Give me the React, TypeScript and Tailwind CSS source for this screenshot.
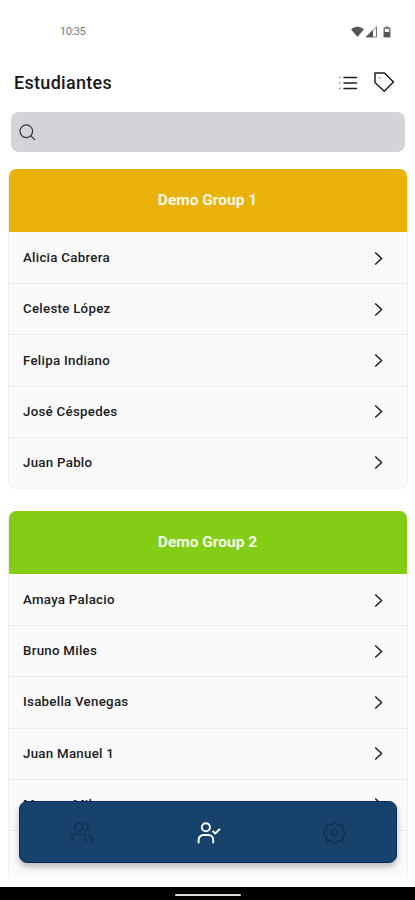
import type { ReactNode } from 'react'

type Group = {
  name: string
  color: string
  students: string[]
}

const groups: Group[] = [
  {
    name: 'Demo Group 1',
    color: 'bg-[#e8b208]',
    students: ['Alicia Cabrera', 'Celeste López', 'Felipa Indiano', 'José Céspedes', 'Juan Pablo'],
  },
  {
    name: 'Demo Group 2',
    color: 'bg-[#83ce14]',
    students: ['Amaya Palacio', 'Bruno Miles', 'Isabella Venegas', 'Juan Manuel 1', 'Marcos Milan', 'Marta Ruiz'],
  },
]

function Icon({ className, width = 1.5, children }: { className: string; width?: number; children: ReactNode }) {
  return (
    <svg
      viewBox="0 0 24 24"
      fill="none"
      stroke="currentColor"
      strokeWidth={width}
      strokeLinecap="round"
      strokeLinejoin="round"
      className={`shrink-0 ${className}`}
    >
      {children}
    </svg>
  )
}

function StatusBar() {
  return (
    <div className="flex h-[63px] items-center justify-between pl-[60px] pr-[24px]">
      <span className="mt-[2px] text-[11px] tracking-[-0.4px] text-[#777]">10:35</span>
      <svg viewBox="0 0 40 12" className="h-3 w-10 text-[#555]" fill="currentColor">
        <path d="M0 3.2C3.8-.2 9.2-.2 13 3.2L6.5 11Z" />
        <path d="M15 11 25.5.8V11Z" fill="none" stroke="currentColor" strokeWidth="0.8" />
        <path d="M15 11 22 4V11Z" />
        <path d="M34.5.5h3v1h2V11.5h-7V1.5h2Z" fill="#777" />
        <path d="M34 3h4v3h-4Z" fill="#fff" />
        <path d="M33 6h6v5h-6Z" />
      </svg>
    </div>
  )
}

function Header() {
  return (
    <div className="flex h-[38px] items-center justify-between pl-[14px] pr-[20px]">
      <h1 className="text-[18px] font-medium tracking-[0.3px] text-[#18181b]">Estudiantes</h1>
      <div className="flex items-center gap-[15px] text-[#202022]">
        <svg viewBox="0 0 20 16" className="mt-px h-4 w-5" fill="none" stroke="currentColor" strokeWidth="1.5">
          <path d="M6 2.5h12.5M6 8h12.5M6 13.5h12.5" strokeLinecap="round" />
          <path d="M1.2 2.5h1.3M1.2 8h1.3M1.2 13.5h1.3" stroke="#777" />
        </svg>
        <svg viewBox="0 0 22 22" className="h-[22px] w-[22px]" fill="none" stroke="currentColor" strokeWidth="1.5" strokeLinejoin="round">
          <path d="M2 2h9.5l9 9-9.3 9.3L2 11.5Z" />
          <circle cx="6.5" cy="6.8" r="0.9" fill="#888" stroke="none" />
        </svg>
      </div>
    </div>
  )
}

function GroupCard({ name, color, students }: Group) {
  return (
    <section className="shrink-0 overflow-hidden rounded-lg border-x border-b border-[#f0f0f1] bg-[#fafafa]">
      <div className={`flex h-[63px] items-center justify-center pr-px text-[15.5px] font-bold text-white/95 ${color}`}>
        {name}
      </div>
      <ul>
        {students.map((student) => (
          <li
            key={student}
            className="flex h-[51.2px] items-center justify-between border-t border-[#ededee] pl-[14px] pr-[19px] text-[13.3px] font-medium tracking-[0.27px] text-[#202023] first:border-t-0 first:pt-px"
          >
            {student}
            <Icon className="size-[19px] text-[#222]" width={2}>
              <path d="m8.5 5 7.5 7-7.5 7" />
            </Icon>
          </li>
        ))}
      </ul>
    </section>
  )
}

function TabBar() {
  return (
    <nav className="absolute bottom-[14px] left-[19px] flex h-[62px] w-[378px] items-center justify-between rounded-lg border border-[#092c61] bg-[#16426b] pl-[50px] pr-[49px] text-[#0f3255] shadow-[0_4px_6px_rgba(0,0,0,0.25)]">
      <Icon className="size-[24px]">
        <circle cx="9" cy="7" r="4" />
        <path d="M2 21.5V18a4 4 0 0 1 4-4h6a4 4 0 0 1 4 4v3.5M15.5 3.2l3.2 3.8-3.2 3.8M19 15.5c2 .6 3 2.5 3 6" />
      </Icon>
      <Icon className="size-[25px] text-white" width={1.9}>
        <circle cx="9.5" cy="7" r="3.9" />
        <path d="M2.5 21.5V19a4.5 4.5 0 0 1 4.5-4.5h5a4.500 4.500 0 0 1 4.500 4.500v2.500M16.500 11l2 2 4-4" />
      </Icon>
      <Icon className="size-[25px]">
        <path d="m10.6 2.3-.7 2.2-2 .8-2.2-1-2 2 1 2.2-.8 2-2.2.7v2.600l2.200.7.8 2-1 2.200 2 2 2.200-1 2 .8.7 2.200h2.800l.7-2.200 2-.8 2.200 1 2-2-1-2.200.8-2 2.200-.7v-2.600l-2.200-.7-.8-2 1-2.200-2-2-2.200 1-2-.8-.7-2.200Z" />
        <circle cx="12" cy="12" r="2.900" />
      </Icon>
    </nav>
  )
}

export default function App() {
  return (
    <div className="flex h-[900px] w-[415px] flex-col overflow-hidden bg-white font-['Roboto',sans-serif]">
      <StatusBar />
      <Header />
      <div className="ml-[11px] mr-[10px] mt-[11px] flex h-[40px] shrink-0 items-center rounded-lg bg-[#d4d4d8] pl-[7px]">
        <Icon className="size-[19px] text-[#3d3d42]" width={1.6}>
          <circle cx="10.5" cy="10.5" r="8" />
          <path d="m16.5 16.5 4.5 4.5" />
        </Icon>
      </div>
      <main className="relative mt-[17px] h-[708px] shrink-0">
        <div className="flex h-full flex-col gap-[22px] overflow-hidden pl-2 pr-[7px]">
          {groups.map((group) => (
            <GroupCard key={group.name} {...group} />
          ))}
        </div>
        <TabBar />
      </main>
      <footer className="mt-auto flex h-[13px] items-center justify-center bg-black">
        <div className="mt-[2px] h-[2px] w-[66px] rounded-full bg-[#ddd]" />
      </footer>
    </div>
  )
}
